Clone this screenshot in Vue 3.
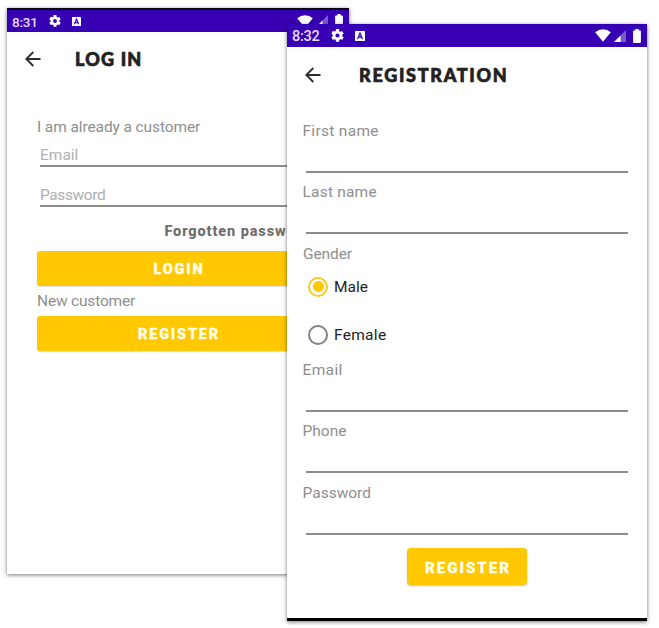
<script setup>
const fieldsTop = [
  { label: 'First name', cls: 't-first' },
  { label: 'Last name', cls: 't-last' }
]
const fieldsBottom = [
  { label: 'Email', cls: 't-email' },
  { label: 'Phone', cls: 't-phone' },
  { label: 'Password', cls: 't-pass' }
]
const screens = [
  { id: 'login', time: '8:31', title: 'LOG IN' },
  { id: 'registration', time: '8:32', title: 'REGISTRATION' }
]
</script>

<template>
  <main class="canvas">
    <section v-for="s in screens" :key="s.id" class="phone" :class="s.id">
      <header class="status">
        <span class="time">{{ s.time }}</span>
        <svg class="gear" viewBox="2 2 20 20"><path fill="#fff" fill-rule="evenodd" d="M19.14 12.94c.04-.3.06-.61.06-.94s-.02-.64-.07-.94l2.03-1.58a.5.5 0 0 0 .12-.61l-1.92-3.32a.5.5 0 0 0-.59-.22l-2.39.96a7 7 0 0 0-1.62-.94l-.36-2.54A.5.5 0 0 0 13.92 2h-3.84a.5.5 0 0 0-.47.41l-.36 2.54c-.59.24-1.13.57-1.62.94l-2.39-.96a.5.5 0 0 0-.59.22L2.74 8.87a.5.5 0 0 0 .12.61l2.03 1.58a6 6 0 0 0 0 1.88l-2.03 1.58a.5.5 0 0 0-.12.61l1.92 3.32c.12.22.37.29.59.22l2.39-.96c.5.38 1.03.7 1.62.94l.36 2.54c.05.24.24.41.48.41h3.84c.24 0 .44-.17.47-.41l.36-2.54a7 7 0 0 0 1.62-.94l2.39.96c.22.08.47 0 .59-.22l1.92-3.32a.5.5 0 0 0-.12-.61zM12 15.2a3.2 3.2 0 1 1 0-6.4 3.2 3.2 0 0 1 0 6.4z"/></svg>
        <svg class="badge" viewBox="0 0 10 10"><rect width="10" height="10" rx=".6" fill="#fff"/><path d="M2.6 8 5 2.3 7.4 8M3.5 6.2h3" fill="none" stroke="#3700b3" stroke-width="1.3"/></svg>
        <span class="grow"></span>
        <svg class="wifi" viewBox="0 0 16 13"><path fill="#fff" d="M.2 3.3Q3.7.3 8 .3t7.8 3L8 12.800z"/></svg>
        <svg class="signal" viewBox="0 0 12 12"><path fill="#fff" opacity=".35" d="M0 12 12 0v12z"/><path fill="#fff" d="M0 12 6.6 5.4V12z"/></svg>
        <svg class="battery" viewBox="0 0 8 14"><path fill="#fff" d="M2.3 0h3.4v1.4H7a.9.9 0 0 1 .9.9v10.8a.9.9 0 0 1-.9.9H1a.9.9 0 0 1-.9-.9V2.300A.9.9 0 0 1 1 1.400h1.300z"/></svg>
      </header>
      <div class="bar">
        <svg class="back" viewBox="0 0 16 16"><path d="M15.500 8H1.500M8.300 1 1.300 8l7 7" fill="none" stroke="#2b2b2b" stroke-width="1.800"/></svg>
        <h1>{{ s.title }}</h1>
      </div>

      <div v-if="s.id === 'login'" class="login-form">
        <p class="lead"><span class="t-already">I am already a customer</span></p>
        <div class="entry"><span>Email</span></div>
        <div class="entry second"><span>Password</span></div>
        <p class="forgot">Forgotten password?</p>
        <button class="btn">LOGIN</button>
        <p class="new"><span class="t-new">New customer</span></p>
        <button class="btn">REGISTER</button>
      </div>

      <div v-else class="reg-form">
        <div v-for="f in fieldsTop" :key="f.label" class="field">
          <label :class="f.cls">{{ f.label }}</label>
          <div class="line"></div>
        </div>
        <div class="gender"><span class="t-gender">Gender</span></div>
        <div class="radio on"><i></i><span class="t-male">Male</span></div>
        <div class="radio"><i></i><span class="t-female">Female</span></div>
        <div class="lower">
          <div v-for="f in fieldsBottom" :key="f.label" class="field">
            <label :class="f.cls">{{ f.label }}</label>
            <div class="line"></div>
          </div>
        </div>
        <button class="btn submit">REGISTER</button>
      </div>
    </section>
  </main>
</template>

<style>
body { margin: 0; background: #fff; }
</style>

<style scoped>
* { box-sizing: border-box; }
.canvas {
  position: relative;
  width: 659px;
  height: 628px;
  overflow: hidden;
  background: #fff;
  font-family: Roboto, "Liberation Sans", sans-serif;
  font-size: 15.5px;
  line-height: 20px;
  color: #8e8e8e;
}
.phone {
  position: absolute;
  background: #fff;
  box-shadow: 0 1px 4px rgba(0, 0, 0, .55);
}
.login { left: 7px; top: 8px; width: 342px; height: 566px; border-top: 2px solid #0b0714; }
.registration { left: 287px; top: 24px; width: 360px; height: 597px; border-bottom: 3px solid #000; }
.status {
  display: flex;
  align-items: center;
  height: 23px;
  padding: 0 6px 0 5px;
  background: #3700b3;
  color: #fff;
}
.login .status { height: 22px; }
.time { width: 37px; padding-top: 2px; font-size: 13.500px; font-weight: 500; letter-spacing: -.2px; color: #e6dcf7; }
.registration .time { width: 39px; font-size: 14.500px; letter-spacing: -.3px; }
.gear { width: 12px; height: 12px; }
.registration .gear { width: 13px; height: 13px; }
.badge { width: 9px; height: 9px; margin-left: 11px; }
.registration .badge { width: 10px; height: 10px; }
.grow { flex: 1; }
.wifi { width: 16px; height: 13px; }
.signal { width: 12px; height: 12px; margin-left: 3px; }
.battery { width: 8px; height: 14px; margin-left: 7px; }
.bar { display: flex; align-items: center; height: 55px; padding-left: 18px; }
.login .bar { height: 54px; }
.back { width: 16px; height: 16px; }
h1 {
  margin: 0 0 0 38px;
  font: 900 18px/24px Lato, sans-serif;
  letter-spacing: 1.700px;
  -webkit-text-stroke: .7px #222;
  color: #222;
  white-space: nowrap;
}
.login h1 { margin-left: 34px; letter-spacing: 1.200px; }
p { margin: 0; }
.t-already { letter-spacing: -.1px; }
.t-new { letter-spacing: -.18px; }
.t-first { letter-spacing: .3px; }
.t-last { letter-spacing: .2px; }
.t-email { letter-spacing: .35px; }
.t-gender { letter-spacing: -.1px; }
.t-female { letter-spacing: .3px; }

.login-form { padding: 31px 30px 0; }
.lead { height: 27px; }
.entry {
  width: 279px;
  height: 23px;
  margin-left: 3px;
  padding-top: 1px;
  border-bottom: 2px solid #8c8c8c;
  color: #b0b0b0;
}
.entry.second { height: 40px; padding-top: 18px; letter-spacing: -.4px; }
.forgot {
  height: 44px;
  padding-top: 15px;
  text-align: right;
  white-space: nowrap;
  font-size: 14.500px;
  font-weight: 800;
  color: #6e6e6e;
  letter-spacing: .9px;
}
.btn {
  display: block;
  width: 100%;
  height: 35px;
  padding: 3px 0 0 2px;
  border: 0;
  border-radius: 3px;
  background: #ffc800;
  color: #fffdf0;
  font: 900 14.500px/20px Roboto, sans-serif;
  letter-spacing: 1.800px;
  -webkit-text-stroke: .3px #fffdf0;
  box-shadow: 0 1px 1px rgba(0, 0, 0, .12);
}
.new { height: 30px; padding-top: 5px; }

.reg-form { padding: 19px 19px 0 16px; }
.field { height: 61.400px; }
label { display: block; height: 20px; margin-left: -.5px; }
.line { height: 32px; margin-left: 3px; border-bottom: 2px solid #8c8c8c; }
.gender { height: 19px; }
.radio { display: flex; align-items: center; height: 48px; padding-left: 5px; color: #222; }
.radio span { padding-top: 1px; }
.radio i {
  display: flex;
  width: 20px;
  height: 20px;
  margin-right: 6px;
  border: 2.300px solid #828282;
  border-radius: 50%;
  align-items: center;
  justify-content: center;
}
.radio.on i { border-color: #fac81e; }
.radio.on i::after { content: ""; width: 11px; height: 11px; border-radius: 50%; background: #ffc800; }
.lower { padding-top: 1px; }
.submit { width: 120px; height: 37px; margin: 4px 0 0 104px; border-radius: 4px; font-size: 15px; letter-spacing: 2px; box-shadow: 0 1px 2px rgba(0, 0, 0, .25); }
</style>
